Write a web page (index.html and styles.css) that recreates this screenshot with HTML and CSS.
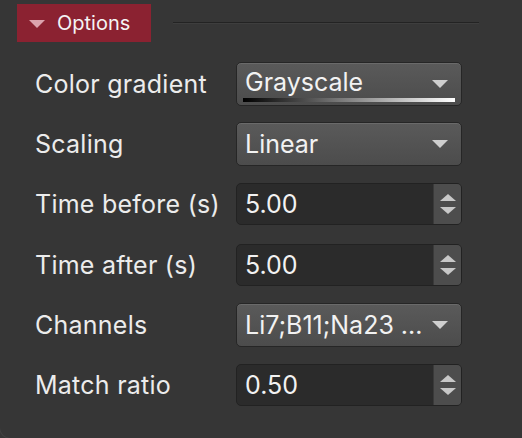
FILE: index.html
```html
<!DOCTYPE html>
<html>
<head>
<meta charset="utf-8">
<link rel="stylesheet" href="styles.css">
</head>
<body>
<div class="panel">
  <div class="header">
    <div class="toggle">
      <span class="tri"></span>
      <span class="toggle-text">Options</span>
    </div>
    <div class="rule"></div>
  </div>
  <div class="form">
    <div class="label">Color gradient</div>
    <div class="combo grad">
      <span class="value">Grayscale</span>
      <span class="arrow"></span>
      <span class="gradbar"></span>
    </div>

    <div class="label">Scaling</div>
    <div class="combo">
      <span class="value">Linear</span>
      <span class="arrow"></span>
    </div>

    <div class="label">Time before (s)</div>
    <div class="spin">
      <span class="value">5.00</span>
      <span class="stepper"><span class="up"></span><span class="down"></span></span>
    </div>

    <div class="label">Time after (s)</div>
    <div class="spin">
      <span class="value">5.00</span>
      <span class="stepper"><span class="up"></span><span class="down"></span></span>
    </div>

    <div class="label">Channels</div>
    <div class="combo">
      <span class="value">Li7;B11;Na23 ...</span>
      <span class="arrow"></span>
    </div>

    <div class="label">Match ratio</div>
    <div class="spin">
      <span class="value">0.50</span>
      <span class="stepper"><span class="up"></span><span class="down"></span></span>
    </div>
  </div>
</div>
</body>
</html>
```

FILE: styles.css
```css
html, body {
  margin: 0;
  padding: 0;
  background: #363636;
  width: 522px;
  height: 438px;
  overflow: hidden;
}

.panel {
  font-family: Inter, "Liberation Sans", sans-serif;
  color: #ececec;
  box-sizing: border-box;
  border-left: 1px solid #414141;
  border-bottom: 1px solid #414141;
  border-bottom-left-radius: 12px;
  margin-left: -1px;
  height: 439px;
}

.header {
  display: flex;
  align-items: center;
  padding-top: 4px;
}

.toggle {
  margin-left: 17px;
  width: 134px;
  height: 38px;
  background: #8b2231;
  display: flex;
  align-items: center;
  box-sizing: border-box;
  padding-left: 12px;
}

.tri {
  width: 0;
  height: 0;
  border-left: 8px solid transparent;
  border-right: 8px solid transparent;
  border-top: 8px solid #dca3ad;
  margin-right: 12px;
  margin-top: 1px;
}

.toggle-text {
  font-size: 20px;
  color: #f4f4f4;
}

.rule {
  margin-left: 22px;
  width: 306px;
  height: 1px;
  background: #232323;
  border-bottom: 1px solid #3e3e3e;
  margin-top: -1px;
}

.form {
  display: grid;
  grid-template-columns: 201px 226px;
  grid-auto-rows: 60.2px;
  align-items: center;
  padding-left: 35px;
  margin-top: 12px;
}

.label {
  font-size: 25px;
  white-space: nowrap;
  letter-spacing: 0.25px;
}

.combo, .spin {
  position: relative;
  height: 44px;
  box-sizing: border-box;
  border-radius: 5px;
  display: flex;
  align-items: center;
  font-size: 25px;
  color: #f2f2f2;
}

.combo {
  background: linear-gradient(#5a5a5a, #4c4c4c);
  border: 1px solid #262626;
  box-shadow: inset 0 1px 0 #6a6a6a;
  padding-left: 8px;
}

.combo .value {
  flex: 1;
  white-space: nowrap;
}

.grad .value {
  margin-top: -4px;
}

.arrow {
  width: 0;
  height: 0;
  border-left: 8px solid transparent;
  border-right: 8px solid transparent;
  border-top: 8px solid #cfcfcf;
  margin-right: 13px;
}

.gradbar {
  position: absolute;
  left: 6px;
  right: 6px;
  bottom: 3px;
  height: 4px;
  background: linear-gradient(to right, #000 0%, #777 45%, #fff 100%);
}

.spin {
  height: 42px;
  background: #2b2b2b;
  border: 1px solid #222;
  padding-left: 8px;
  overflow: hidden;
}

.spin .value {
  flex: 1;
}

.stepper {
  width: 27px;
  align-self: stretch;
  background: #4d4d4d;
  border-left: 1px solid #3a3a3a;
  display: flex;
  flex-direction: column;
  align-items: center;
  justify-content: center;
  gap: 6px;
}

.up {
  width: 0;
  height: 0;
  border-left: 8px solid transparent;
  border-right: 8px solid transparent;
  border-bottom: 7px solid #c8c8c8;
}

.down {
  width: 0;
  height: 0;
  border-left: 8px solid transparent;
  border-right: 8px solid transparent;
  border-top: 7px solid #c8c8c8;
}
```
